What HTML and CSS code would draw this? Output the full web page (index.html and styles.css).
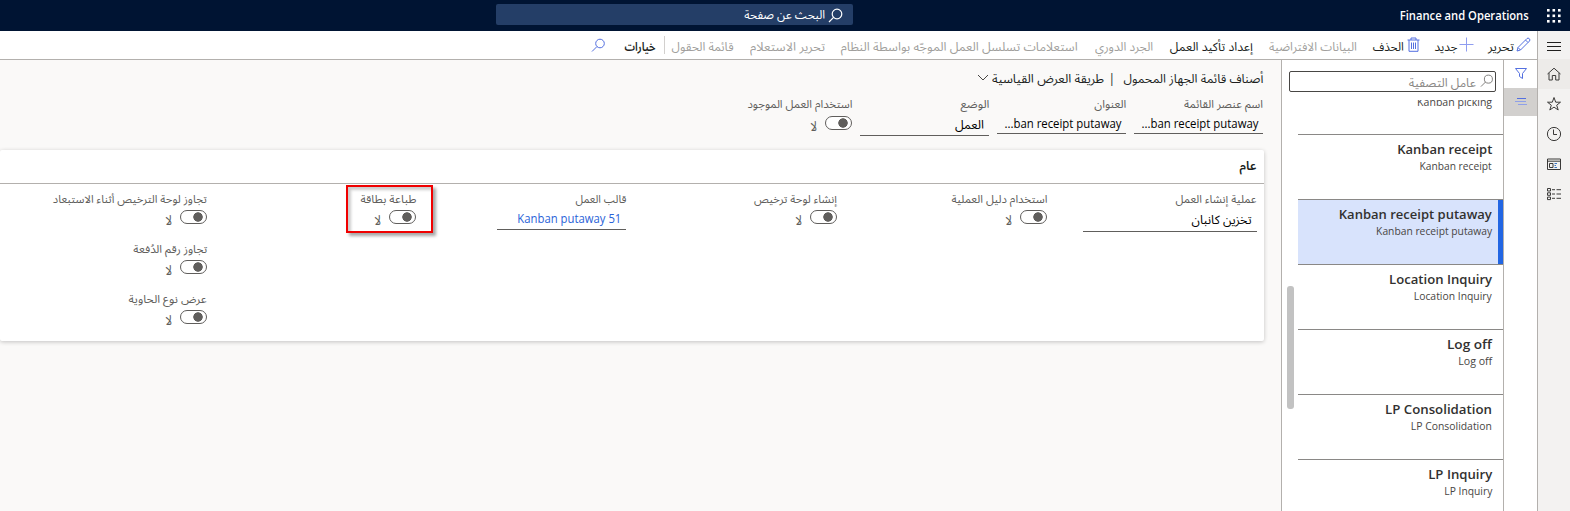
FILE: index.html
```html
<!DOCTYPE html>
<html lang="ar" dir="rtl">
<head>
<meta charset="utf-8">
<title>Finance and Operations</title>
<link rel="stylesheet" href="styles.css">
</head>
<body>
<header class="top">
  <svg class="waffle" viewBox="0 0 14 14"><g fill="#fff"><rect width="2.6" height="2.6"/><rect x="5.500" width="2.6" height="2.6"/><rect x="11" width="2.6" height="2.6"/><rect y="5.500" width="2.6" height="2.6"/><rect x="5.500" y="5.500" width="2.6" height="2.6"/><rect x="11" y="5.500" width="2.6" height="2.6"/><rect y="11" width="2.6" height="2.6"/><rect x="5.500" y="11" width="2.6" height="2.6"/><rect x="11" y="11" width="2.6" height="2.6"/></g></svg>
  <span class="brand" data-w="129">Finance and Operations</span>
  <div class="search">
    <svg class="ico15" viewBox="0 0 15 15"><circle cx="9" cy="6" r="4.800"/><path d="M5.600 9.400L1 14"/></svg>
    <span data-w="81">البحث عن صفحة</span>
  </div>
</header>
<div class="shell">
  <nav class="rail">
    <div class="cell"><svg viewBox="0 0 16 16"><path d="M1 3.500H15M1 7.500H15M1 11.500H15"/></svg></div>
    <div class="cell on"><svg viewBox="0 0 16 16"><path d="M1.500 8L8 2.200L14.500 8M3 7V14H6.300V9.500H9.700V14H13V7"/></svg></div>
    <div class="cell"><svg viewBox="0 0 16 16"><path d="M8 1.500L9.700 6.200H14.500L10.700 9.200L12.200 14L8 11.100L3.800 14L5.300 9.200L1.500 6.200H6.300Z"/></svg></div>
    <div class="cell"><svg viewBox="0 0 16 16"><circle cx="8" cy="8" r="6.600"/><path d="M7.500 3.500V8.500H11"/></svg></div>
    <div class="cell"><svg viewBox="0 0 16 16"><path d="M1.500 3H14.500V13.500H1.500ZM1.500 5.200H14.500"/><path d="M3.500 7.500H7V11.500H3.500Z"/><path d="M8.500 7.500H11M8.500 9.500H10M8.500 11.500H11" stroke="#3a76c4"/></svg></div>
    <div class="cell"><svg viewBox="0 0 16 16"><path d="M1.500 2.500H4.500V5H1.500ZM1.500 6.800H4.500V9.300H1.500ZM1.500 11.100H4.500V13.600H1.500Z"/><path d="M6 3.700H9M10.500 3.700H15M6 8H9M10.500 8H15M6 12.300H9M10.500 12.300H15"/></svg></div>
  </nav>
  <div class="work">
    <div class="bar">
      <div class="act a1"><svg class="ico15" viewBox="0 0 15 15"><path d="M1 14L2 10.500L11 1.500Q12 .5 13.300 1.700Q14.500 3 13.500 4L4.500 13ZM9.500 3L12 5.500M2 10.500L4.500 13"/></svg><span data-w="26">تحرير</span></div>
      <div class="act a2"><svg class="ico15" viewBox="0 0 15 15"><path d="M7.500 .5V14.500M.5 7.500H14.500" stroke="#8f9df0"/></svg><span data-w="23">جديد</span></div>
      <div class="act a3"><svg class="ico15 bin" viewBox="0 0 13 15"><path d="M.5 3H12.500M4 3V1H9V3M2 3V14.300H11V3M4.500 5.500V12M6.500 5.500V12M8.500 5.500V12"/></svg><span data-w="31">الحذف</span></div>
      <div class="act off a4"><span data-w="88">البيانات الافتراضية</span></div>
      <div class="act a5"><span data-w="83">إعداد تأكيد العمل</span></div>
      <div class="act off a6"><span data-w="58">الجرد الدوري</span></div>
      <div class="act off a7"><span data-w="237">استعلامات تسلسل العمل الموجّه بواسطة النظام</span></div>
      <div class="act off a8"><span data-w="75">تحرير الاستعلام</span></div>
      <div class="act off a9"><span data-w="62">قائمة الحقول</span></div>
      <i class="sep"></i>
      <div class="act strong a10"><span data-w="31">خيارات</span></div>
      <svg class="ico15 find" viewBox="0 0 15 15"><circle cx="9" cy="5.500" r="4.300"/><path d="M6 8.500L1 13.500"/></svg>
    </div>
    <div class="body">
      <div class="tabs">
        <div class="tab"><svg viewBox="0 0 14 14"><path d="M1.500 1.500H12.500L8.500 6.500V11.500L5.500 9.500V6.500Z"/></svg></div>
        <div class="tab on"><svg viewBox="0 0 14 14"><path d="M3 4.500H12"/><path d="M1 7.500H12M4 10.500H13" stroke="#8fa0e8"/></svg></div>
      </div>
      <aside class="list">
        <div class="filter"><svg class="ico13" viewBox="0 0 15 15"><circle cx="9" cy="5.500" r="4.300"/><path d="M6 8.500L1 13.500"/></svg><span data-w="67">عامل التصفية</span></div>
        <div class="rows">
          <div class="row first"><span data-w="75">Kanban picking</span></div>
          <div class="row"><b data-w="95">Kanban receipt</b><span data-w="72">Kanban receipt</span></div>
          <div class="row sel"><b data-w="153">Kanban receipt putaway</b><span data-w="116">Kanban receipt putaway</span></div>
          <div class="row"><b data-w="103">Location Inquiry</b><span data-w="78">Location Inquiry</span></div>
          <div class="row"><b data-w="45">Log off</b><span data-w="34">Log off</span></div>
          <div class="row"><b data-w="107">LP Consolidation</b><span data-w="81">LP Consolidation</span></div>
          <div class="row last"><b data-w="64">LP Inquiry</b><span data-w="48">LP Inquiry</span></div>
        </div>
        <i class="thumb"></i>
      </aside>
      <main class="main">
        <div class="title"><span data-w="140">أصناف قائمة الجهاز المحمول</span><em>|</em><span data-w="112">طريقة العرض القياسية</span><svg class="chev" viewBox="0 0 12 7"><path d="M1 1L6 6L11 1"/></svg></div>
        <div class="fields head">
          <div class="f f1"><label><span data-w="79">اسم عنصر القائمة</span></label><div class="val" dir="ltr"><span data-w="117">...ban receipt putaway</span></div></div>
          <div class="f f2"><label><span data-w="32">العنوان</span></label><div class="val" dir="ltr"><span data-w="117">...ban receipt putaway</span></div></div>
          <div class="f f3"><label><span data-w="29">الوضع</span></label><div class="val low"><span data-w="29">العمل</span></div></div>
          <div class="f f4"><label><span data-w="105">استخدام العمل الموجود</span></label><div class="sw"><i></i><span data-w="7">لا</span></div></div>
        </div>
        <section class="card">
          <h2><span data-w="17">عام</span></h2>
          <div class="fields grid">
            <div class="f g1"><label><span data-w="81">عملية إنشاء العمل</span></label><div class="val"><span data-w="60">تخزين كانبان</span></div></div>
            <div class="f g2"><label><span data-w="96">استخدام دليل العملية</span></label><div class="sw"><i></i><span data-w="7">لا</span></div></div>
            <div class="f g3"><label><span data-w="83">إنشاء لوحة ترخيص</span></label><div class="sw"><i></i><span data-w="7">لا</span></div></div>
            <div class="f g4"><label><span data-w="51">قالب العمل</span></label><div class="val link" dir="ltr"><span data-w="104">Kanban putaway 51</span></div></div>
            <div class="f g5"><label><span data-w="56">طباعة بطاقة</span></label><div class="sw"><i></i><span data-w="7">لا</span></div><div class="mark"></div></div>
            <div class="g6">
              <div class="f"><label><span data-w="154">تجاوز لوحة الترخيص أثناء الاستبعاد</span></label><div class="sw"><i></i><span data-w="7">لا</span></div></div>
              <div class="f"><label><span data-w="74">تجاوز رقم الدُفعة</span></label><div class="sw"><i></i><span data-w="7">لا</span></div></div>
              <div class="f"><label><span data-w="78">عرض نوع الحاوية</span></label><div class="sw"><i></i><span data-w="7">لا</span></div></div>
            </div>
          </div>
        </section>
      </main>
    </div>
  </div>
</div>
<script src="fit.js"></script>
</body>
</html>
```
FILE: styles.css
```css
* { box-sizing: border-box; }
body { margin: 0; width: 1570px; height: 511px; overflow: hidden; background: #faf9f8; color: #201f1e; font: 12px/16px "Open Sans", "Noto Sans", "Noto Sans Arabic", "DejaVu Sans", sans-serif; }
svg { fill: none; stroke: #484644; stroke-width: 1; flex: none; display: block; }
i { font-style: normal; }
[data-w] { display: inline-block; white-space: nowrap; flex: none; font-weight: inherit; transform-origin: right center; }
.ico15 { width: 15px; height: 15px; }
.ico13 { width: 14px; height: 14px; stroke: #797775; margin-top: -3px; }
.top { height: 31px; background: #001433; display: flex; align-items: center; color: #fff; }
.waffle { width: 14px; height: 14px; margin-right: 9px; stroke: none; }
.brand { margin-right: 18px; font-weight: 600; font-size: 12.5px; direction: ltr; }
.search { margin-right: 547px; width: 357px; height: 21px; background: #243e67; border-radius: 2px; margin-top: -2px; padding: 1px 10px 0 0; display: flex; align-items: center; gap: 3px; }
.search svg { stroke: #fff; stroke-width: 1.2; }
.shell { display: flex; height: 480px; }
.rail { width: 33px; background: #f3f2f1; border-left: 1px solid #b3b0ad; }
.cell { height: 30px; display: flex; align-items: center; justify-content: center; }
.cell:first-child { height: 28px; padding: 3px 0 0; }
.cell:first-child svg { stroke: #201f1e; }
.cell.on { background: #edebe9; }
.cell svg { width: 16px; height: 16px; stroke: #3b3a39; }
.work { width: 1537px; display: flex; flex-direction: column; }
.bar { height: 29px; background: #fff; border-bottom: 1px solid #b3b0ad; display: flex; align-items: center; padding-right: 6px; }
.act { display: flex; align-items: center; gap: 2px; height: 28px; padding-top: 3px; }
.act svg { stroke: #5470e0; margin-top: -4px; }
.act .bin { width: 13px; margin-left: 1px; }
.off { color: #a19f9d; }
.strong { font-weight: 600; }
.a2 { margin-right: 14px; }
.a3 { margin-right: 14px; }
.a4 { margin-right: 16px; }
.a5 { margin-right: 16px; }
.a6, .a7 { margin-right: 17px; }
.a8, .a9 { margin-right: 16px; }
.sep { width: 1px; height: 18px; background: #d2d0ce; margin-right: 7px; }
.a10 { margin-right: 9px; }
.find { stroke: #5470e0; margin-right: 18px; }
.body { display: flex; height: 451px; }
.tabs { width: 34px; background: #fff; border-left: 1px solid #b3b0ad; }
.tab { height: 28px; display: flex; align-items: center; justify-content: center; }
.tab.on { background: #d2d0ce; padding-bottom: 3px; }
.tab svg { width: 14px; height: 14px; stroke: #5470e0; }
.list { width: 222px; background: #fff; border-left: 1px solid #b3b0ad; position: relative; overflow: hidden; }
.filter { margin: 11px 7px 0 0; width: 207px; height: 21px; border: 1px solid #484644; border-radius: 2px; display: flex; align-items: center; padding: 2px 1px 0; gap: 4px; color: #8a8886; }
.rows { height: 411px; margin-top: 8px; overflow: hidden; }
.row { width: 205px; height: 65px; border-bottom: 1px solid #8a8886; padding: 5px 11px 0 0; direction: ltr; display: flex; flex-direction: column; align-items: flex-end; font-size: 11px; line-height: 15px; color: #484644; }
.row b { font-size: 13px; font-weight: 600; line-height: 19px; margin-bottom: -1px; color: #323130; }
.row.first { margin-top: -6px; height: 41px; padding-top: 0; }
.row.last { height: 51px; border: 0; }
.row.sel { background: linear-gradient(to left, #2266e3 5px, #d8e3fc 5px); }
.thumb { position: absolute; left: 5px; top: 226px; width: 7px; height: 123px; border-radius: 3px; background: #c2c2c2; }
.main { flex: 1; overflow: hidden; }
.title { height: 36px; padding: 2px 18px 0 0; display: flex; align-items: center; }
.title em { font-style: normal; margin: 0 8px 0 7px; width: 4px; }
.chev { width: 12px; height: 7px; margin-right: 3px; margin-top: -3px; }
.fields { display: flex; align-items: flex-start; }
.f { position: relative; }
.f label { display: block; height: 16px; color: #605e5c; font-size: 11px; line-height: 16px; }
.val { height: 22px; border-bottom: 1px solid #605e5c; padding: 3px 5px 0; text-align: right; line-height: 17px; color: #000; }
.head { padding-right: 18px; height: 54px; gap: 8px; }
.head .val { height: 22px; padding-top: 3px; } .head .val.low { height: 24px; padding-top: 4px; }
.head .sw { padding-top: 1px; }
.f1, .f2, .f3 { width: 129px; }
.sw { display: flex; height: 20px; gap: 8px; }
.sw i { width: 27px; height: 14px; border: 1px solid #605e5c; border-radius: 7px; background: radial-gradient(circle at 17px 6px, #605e5c 4.400px, #fff 5px); margin-top: 3px; }
.sw span { margin-top: 4px; font-size: 14px; line-height: 18px; color: #605e5c; }
.card { margin-right: 17px; height: 191px; background: #fff; border-radius: 2px; box-shadow: 0 1px 4px rgba(0,0,0,.22); }
h2 { margin: 0; height: 34px; border-bottom: 1px solid #b3b0ad; padding: 8px 8px 0; font-size: 12px; line-height: 16px; font-weight: 600; }
.grid { padding: 7px 7px 0 0; }
.g1 { width: 174px; }
.g1 .val { height: 25px; padding-top: 4px; }
.g2 { margin-right: 36px; width: 96px; }
.g3 { margin-right: 114px; width: 83px; }
.g4 { margin-right: 128px; width: 129px; }
.g4 .val { height: 23px; }
.g5 { margin-right: 81px; width: 56px; }
.g6 { margin-right: 153px; }
.g6 .f { height: 50px; }
.val.link { color: #2a62d8; }
.mark { position: absolute; left: -14px; top: -6px; width: 87px; height: 48px; border: 2px solid #f00000; box-shadow: 3px 3px 3px rgba(0,0,0,.35), inset 3px 3px 3px rgba(0,0,0,.2); }
```
FILE: fit.js
```js
// Condense each label to the column width given in data-w.
document.querySelectorAll('[data-w]').forEach(function (el) {
  var want = Number(el.dataset.w);
  var have = el.getBoundingClientRect().width;
  el.style.transform = 'scaleX(' + want / have + ')';
  el.style.marginLeft = (want - have) + 'px';
});
```
